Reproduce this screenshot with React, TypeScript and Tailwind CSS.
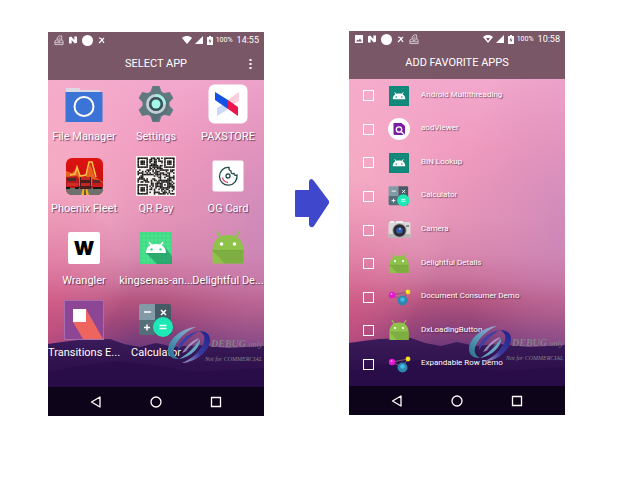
import type { ReactNode } from "react";

function Wallpaper({ id }: { id: string }) {
  return (
    <svg className="absolute inset-0 h-full w-full" viewBox="0 0 216 384" preserveAspectRatio="none" aria-hidden="true">
      <defs>
        <linearGradient id={`${id}-sky`} x1="0" y1="0" x2="0" y2="1">
          <stop offset="0.12" stopColor="#f2a8cd" />
          <stop offset="0.3" stopColor="#f09cc0" />
          <stop offset="0.48" stopColor="#e595b8" />
          <stop offset="0.58" stopColor="#d888ae" />
          <stop offset="0.65" stopColor="#c6709a" />
          <stop offset="0.7" stopColor="#b3557f" />
          <stop offset="0.75" stopColor="#994779" />
          <stop offset="0.83" stopColor="#6b387b" />
        </linearGradient>
        <radialGradient id={`${id}-lilac`} cx="1" cy="0.5" r="0.5">
          <stop offset="0" stopColor="#c084bd" stopOpacity="0.6" />
          <stop offset="0.5" stopColor="#c985b8" stopOpacity="0.3" />
          <stop offset="1" stopColor="#d07fb4" stopOpacity="0" />
        </radialGradient>
        <radialGradient id={`${id}-glow`} cx="0" cy="0.35" r="0.5">
          <stop offset="0" stopColor="#f8b0c6" stopOpacity="0.8" />
          <stop offset="1" stopColor="#f9b4cb" stopOpacity="0" />
        </radialGradient>
        <radialGradient id={`${id}-rose`} cx="0" cy="0.78" r="0.4">
          <stop offset="0" stopColor="#d9517f" stopOpacity="0.65" />
          <stop offset="0.4" stopColor="#d9517f" stopOpacity="0.35" />
          <stop offset="1" stopColor="#dc5484" stopOpacity="0" />
        </radialGradient>
        <linearGradient id={`${id}-hill`} x1="0" y1="0" x2="0" y2="1">
          <stop offset="0" stopColor="#3b1b5a" />
          <stop offset="0.35" stopColor="#2f124d" />
          <stop offset="1" stopColor="#240b43" />
        </linearGradient>
      </defs>
      <rect width="216" height="384" fill={`url(#${id}-sky)`} />
      <rect width="216" height="384" fill={`url(#${id}-lilac)`} />
      <rect width="216" height="384" fill={`url(#${id}-glow)`} />
      <rect width="216" height="384" fill={`url(#${id}-rose)`} />
      <path
        d="M0 312 L14 310 L30 308 L62 307 L76 312 L92 315 L108 311 L126 315 L150 313 L180 316 L216 314 V384 H0 Z"
        fill={`url(#${id}-hill)`}
      />
      <path d="M0 340 L30 334 L70 329 L110 334 L150 340 L216 336 V384 H0 Z" fill="#230a45" opacity="0.5" />
    </svg>
  );
}

function Watermark({ id }: { id: string }) {
  return (
    <div className="pointer-events-none absolute right-0 top-[294px] flex items-start">
      <svg className="h-[38px] w-[44px] shrink-0" viewBox="0 0 44 38" aria-hidden="true">
        <defs>
          <linearGradient id={`${id}-teal`} x1="1" y1="0" x2="0" y2="1">
            <stop offset="0" stopColor="#a3a6cf" />
            <stop offset="0.5" stopColor="#5b9dbb" />
            <stop offset="1" stopColor="#25708f" />
          </linearGradient>
          <linearGradient id={`${id}-blue`} x1="1" y1="0" x2="0" y2="1">
            <stop offset="0" stopColor="#22228c" />
            <stop offset="0.55" stopColor="#3a3a9e" />
            <stop offset="1" stopColor="#a9a0cc" />
          </linearGradient>
        </defs>
        <path d="M29 1C14 2 1 14 1 24c0 6 4 9 11 9-6-3-7-8-3-15C13 11 20 5 29 1z" fill={`url(#${id}-teal)`} />
        <path d="M33 13c1 8-9 18-21 20 8-4 16-12 21-20z" fill="#6aa5c4" />
        <path d="M15 37C30 36 43 24 43 14c0-6-4-9-11-9 6 3 7 8 3 15-4 7-11 13-20 17z" fill={`url(#${id}-blue)`} />
        <path d="M11 25C10 17 20 7 32 5c-8 4-16 12-21 20z" fill="#3c3fa6" />
        <path d="M32 12c-6 2-13 8-17 15 7-2 14-8 17-15zm-1 2c-2 5-7 9-12 11 3-4 7-8 12-11z" fill="#b9b6dc" opacity="0.700" />
      </svg>
      <div className="w-[53px] whitespace-nowrap pt-[11px] font-['Liberation_Serif',serif] italic text-[#858089]">
        <p className="text-[10px] leading-[14px]">
          <b>DEBUG</b> <span className="text-[8px]">only</span>
        </p>
        <p className="-ml-1.5 text-[6px] leading-[14px]">Not for COMMERCIAL</p>
      </div>
    </div>
  );
}

function PrinterIcon() {
  return (
    <svg className="h-[11px] w-[10px]" viewBox="0 0 11 11" fill="none" stroke="#d8ccd2" aria-hidden="true">
      <path d="M3.500 5V2.500l2-2h3V5M1 10V6l2-1h6l1 1v4zM1 8h9M5 3h2M4 6.500h3" />
    </svg>
  );
}

function NougatIcon() {
  return (
    <svg className="h-[8px] w-[8px]" viewBox="0 0 9 8" aria-hidden="true">
      <path d="M0 8V1l2.500-1L6 4V0h3v7L6.500 8 3 4v4z" fill="#fff" />
    </svg>
  );
}

function CrossIcon() {
  return (
    <svg className="h-[7px] w-[7px]" viewBox="0 0 7 7" aria-hidden="true">
      <path d="M1 1l2 .5 3 4.500M6 1L1 6" stroke="#fff" strokeWidth="1.200" fill="none" />
    </svg>
  );
}

function PictureIcon() {
  return (
    <svg className="h-[8px] w-[8px]" viewBox="0 0 8 8" aria-hidden="true">
      <path fillRule="evenodd" d="M0 0h8v8H0zM1 6.500h6L5 3.500 3.500 5.500 2.500 4.500z" fill="#fff" />
    </svg>
  );
}

function StatusBar({ time, picture }: { time: string; picture?: boolean }) {
  return (
    <div className="flex h-4 items-center justify-between pl-[6px] pr-[5px]">
      <div className="flex items-center gap-[5px]">
        {picture ? <PictureIcon /> : <PrinterIcon />}
        <NougatIcon />
        <span className="h-[11px] w-[11px] rounded-full bg-white" />
        <CrossIcon />
        {picture && <PrinterIcon />}
      </div>
      <div className="flex items-center text-white">
        <svg className="mr-[3px] h-[8px] w-[10px]" viewBox="0 0 10 8" aria-hidden="true">
          <path d="M0 2C3-.6 7-.6 10 2L5 8z" fill="#fff" />
          {picture && <path d="M3 3h4L5 6z" fill="#7a5767" />}
        </svg>
        <svg className="mr-1 h-[8px] w-[8px]" viewBox="0 0 8 8" aria-hidden="true">
          <path d="M8 0v8H0z" fill="#fff" />
        </svg>
        <svg className="mr-[3px] h-[9px] w-[6px]" viewBox="0 0 6 9" aria-hidden="true">
          <path d="M2 0h2v1h2v8H0V1h2z" fill="#fff" />
          <path d="M3.500 2L1.500 5.500H3L2.500 8l2-3.500H3z" fill="#7a5767" />
        </svg>
        <span className="mr-1 text-[7px] leading-none">100%</span>
        <span className="text-[9px] leading-none">{time}</span>
      </div>
    </div>
  );
}

function NavBar() {
  return (
    <nav className="relative flex h-[29px] items-center bg-[#0e0419] px-[18px]">
      <button type="button" aria-label="Back" className="flex flex-1 justify-center">
        <svg className="h-[12px] w-[12px]" viewBox="0 0 12 12" fill="none" stroke="#fff" strokeWidth="1.300">
          <path d="M10 1v10L1.500 6z" strokeLinejoin="round" />
        </svg>
      </button>
      <button type="button" aria-label="Home" className="flex flex-1 justify-center">
        <svg className="h-[12px] w-[12px]" viewBox="0 0 12 12" fill="none" stroke="#fff" strokeWidth="1.300">
          <circle cx="6" cy="6" r="5" />
        </svg>
      </button>
      <button type="button" aria-label="Recent apps" className="flex flex-1 justify-center">
        <svg className="h-[12px] w-[12px]" viewBox="0 0 12 12" fill="none" stroke="#fff" strokeWidth="1.300">
          <path d="M1.500 1.500h9v9h-9z" />
        </svg>
      </button>
    </nav>
  );
}

function Phone({
  id,
  title,
  time,
  menu,
  children,
}: {
  id: string;
  title: string;
  time: string;
  menu?: boolean;
  children: ReactNode;
}) {
  return (
    <section className="relative flex h-[384px] w-[216px] shrink-0 flex-col overflow-hidden">
      <Wallpaper id={id} />
      <header className="relative h-12 bg-[#7a5767]">
        <StatusBar time={time} picture={!menu} />
        <div className="relative flex h-8 items-center justify-center">
          <h1 className="text-[11px] leading-4 text-white">{title}</h1>
          {menu && (
            <button type="button" aria-label="More options" className="absolute right-[11px] flex h-4 w-[5px] items-center justify-center">
              <svg className="h-[10px] w-[3px]" viewBox="0 0 3 10" fill="#fff">
                <path d="M.5 0h2v2h-2zM.5 4h2v2h-2zM.5 8h2v2h-2z" />
              </svg>
            </button>
          )}
        </div>
      </header>
      <main className="relative flex flex-1 flex-col">{children}</main>
      <Watermark id={id} />
      <NavBar />
    </section>
  );
}

function FileManagerIcon() {
  return (
    <svg className="h-10 w-10" viewBox="0 0 40 40" aria-hidden="true">
      <path d="M2 4h13l2 2h19v6H2z" fill="#dcd8e4" />
      <path d="M1.500 8h37v30h-37z" fill="#3b73d6" />
      <circle cx="20" cy="22.500" r="9.500" fill="none" stroke="#fff" strokeWidth="2" />
    </svg>
  );
}

function SettingsIcon() {
  const teeth = [0, 60, 120, 180, 240, 300];
  return (
    <svg className="h-10 w-10" viewBox="0 0 40 40" aria-hidden="true">
      <g fill="#607980">
        {teeth.map((angle) => (
          <path key={angle} d="M14.500 8L16.500 2h7L25.500 8z" transform={`rotate(${angle} 20 20)`} />
        ))}
        <circle cx="20" cy="20" r="13.500" />
      </g>
      <path d="M14 28L30 14l3 4-3 11-6 3-4 5h-3z" fill="#4a626b" opacity="0.400" />
      <circle cx="20" cy="20" r="8.500" fill="none" stroke="#c3d0d3" strokeWidth="3" />
      <path d="M20 11.500a8.500 8.500 0 0 1 8.500 8.500" fill="none" stroke="#a5eee3" strokeWidth="3" />
      <circle cx="20" cy="20" r="7" fill="#34525c" />
      <circle cx="20" cy="20" r="4.500" fill="#a5f7ea" />
    </svg>
  );
}

function PaxstoreIcon() {
  return (
    <svg className="h-10 w-10" viewBox="0 0 40 40" aria-hidden="true">
      <rect x="0.500" y="0.500" width="39" height="39" rx="6" fill="#fff" />
      <path d="M31 8v9l-10 6v-8z" fill="#fbcfdc" />
      <path d="M9 24l10-6v8l-10 6z" fill="#cbdafa" />
      <path d="M7 8l13 8v9L7 16z" fill="#1350e8" />
      <path d="M20 16l10 7v9l-10-7z" fill="#e8174f" />
    </svg>
  );
}

function PhoenixIcon() {
  return (
    <svg className="h-[37px] w-[37px]" viewBox="0 0 37 37" aria-hidden="true">
      <defs>
        <linearGradient id="phoenix-red" x1="0" y1="0" x2="0" y2="1">
          <stop offset="0" stopColor="#e01212" />
          <stop offset="0.6" stopColor="#c81010" />
          <stop offset="1" stopColor="#4b3c38" />
        </linearGradient>
        <clipPath id="phoenix-clip">
          <rect width="37" height="37" rx="6" />
        </clipPath>
      </defs>
      <g clipPath="url(#phoenix-clip)">
        <rect width="37" height="37" fill="url(#phoenix-red)" />
        <path d="M0 13l6 2 5-5 4 8 5 1 4-14 5 14 8 5v4H0z" fill="#e8601f" />
        <path d="M4 17l5-1 2-7 3 9 6-1 3-13h3l4 15" fill="none" stroke="#f8c548" strokeWidth="1.500" />
        <path d="M0 30h37v7H0z" fill="#6d706b" />
        <path d="M17 30h4l2 7h-8z" fill="#f2ad26" />
        <path d="M18.500 30h1l.5 7h-2z" fill="#4c4c42" />
        <path d="M0 19l11-1 2 3v9H0z" fill="#b3191b" />
        <path d="M1 20h9v3H1z" fill="#4b2d2e" />
        <path d="M1 25h11v3H1z" fill="#d42b27" />
        <path d="M14 19h11v12H14z" fill="#4c1d1e" />
        <path d="M15 19h9v3h-9zM15 25h9v3h-9z" fill="#c42825" />
        <path d="M26 21l7 1 4 3v5H26z" fill="#c91c1c" />
        <path d="M27 22h6l2 3h-8z" fill="#5d2a2b" />
        <path d="M0 29h4v2H0zM9 29h4v2H9zM27 29h9v2h-9z" fill="#1c1718" />
      </g>
    </svg>
  );
}

const QR_SIZE = 25;

function isDark(x: number, y: number) {
  const finders = [
    [0, 0],
    [QR_SIZE - 7, 0],
    [0, QR_SIZE - 7],
  ];
  for (const [fx, fy] of finders) {
    const dx = x - fx;
    const dy = y - fy;
    if (dx >= -1 && dx <= 7 && dy >= -1 && dy <= 7) {
      const ring = Math.max(Math.abs(dx - 3), Math.abs(dy - 3));
      return ring === 3 || ring <= 1;
    }
  }
  const ring = Math.max(Math.abs(x - 18), Math.abs(y - 18));
  if (ring <= 2) return ring !== 1;
  const hash = Math.sin(x * 12.9898 + y * 78.233) * 43758.5453;
  return hash - Math.floor(hash) > 0.48;
}

function QrIcon() {
  const cells: ReactNode[] = [];
  for (let y = 0; y < QR_SIZE; y++) {
    for (let x = 0; x < QR_SIZE; x++) {
      if (isDark(x, y)) cells.push(<rect key={`${x}-${y}`} x={x} y={y} width="1.04" height="1.04" />);
    }
  }
  return (
    <svg className="h-10 w-10 bg-[#f5f1ee]" viewBox="-1 -1 27 27" fill="#171616" aria-hidden="true">
      {cells}
    </svg>
  );
}

function OgCardIcon() {
  return (
    <svg className="h-8 w-8" viewBox="0 0 32 32" fill="none" aria-hidden="true">
      <rect x="0.500" y="0.500" width="31" height="31" rx="2" fill="#fff" />
      <path
        d="M17 7.500a8.800 8.800 0 1 0 8 7.500c-1.500 1-3 0-3-1.500-2 .5-3.500-.5-3-2.500-1.500-.5-2.500-1.500-2-3.500z"
        stroke="#1f4a49"
        strokeWidth="1.300"
      />
      <circle cx="16" cy="16" r="2" stroke="#1f4a49" strokeWidth="1.300" />
      <path d="M10.500 17.500c.5 3 2.500 4.500 5.500 5" stroke="#e5395d" strokeWidth="1.300" />
    </svg>
  );
}

function WranglerIcon() {
  return (
    <span className="flex h-8 w-8 items-center justify-center rounded-[2px] bg-white font-['Inter',sans-serif] text-[19px] font-black leading-none text-black" aria-hidden="true">
      W
    </span>
  );
}

function AndroidTileIcon({ small }: { small?: boolean }) {
  const tile = small ? "#0b8576" : "#3ddc84";
  const grid = small ? "#2c9688" : "#6be6a2";
  return (
    <svg className={small ? "h-5 w-5" : "h-8 w-8"} viewBox="0 0 32 32" aria-hidden="true">
      <rect width="32" height="32" rx="1" fill={tile} />
      <path
        d="M4 0v32M8 0v32M12 0v32M16 0v32M20 0v32M24 0v32M28 0v32M0 4h32M0 8h32M0 12h32M0 16h32M0 20h32M0 24h32M0 28h32"
        stroke={grid}
        strokeWidth="0.500"
      />
      {!small && <path d="M6 21l11 11h15V24L24 14z" fill="#0c6b4e" opacity="0.450" />}
      <path d="M6 21c0-6 4-9 10-9s10 3 10 9z" fill="#fff" />
      <path d="M9 10l3 4M23 10l-3 4" stroke="#fff" strokeWidth="1.500" />
      <circle cx="11.500" cy="17.500" r="1.200" fill={tile} />
      <circle cx="20.500" cy="17.500" r="1.200" fill={tile} />
    </svg>
  );
}

function DroidIcon({ small }: { small?: boolean }) {
  return (
    <svg className={small ? "h-[21px] w-5" : "h-[34px] w-8"} viewBox="0 0 32 34" aria-hidden="true">
      <path d="M4.500 0l5 8M27.500 0l-5 8" stroke="#8bc34a" strokeWidth="1.800" />
      <path d="M.5 19C1 9 7 4 16 4s15 5 15.500 15v13.500h-31z" fill="#8fc24b" />
      <path d="M.5 19.500h31v13H13z" fill="#7eae42" />
      <path d="M.5 19.500h31" stroke="#74a43d" strokeWidth="0.800" />
      <circle cx="9.500" cy="13" r="1.800" fill="#fff" />
      <circle cx="22.500" cy="13" r="1.800" fill="#fff" />
    </svg>
  );
}

function TransitionsIcon() {
  return (
    <svg className="h-10 w-10" viewBox="0 0 40 40" aria-hidden="true">
      <rect x="0.500" y="0.500" width="39" height="39" fill="#8d4596" stroke="#a66cae" />
      <path d="M9 22l13-13 17 30H19z" fill="#ee655f" />
      <rect x="9" y="9" width="13" height="13" fill="#fff" />
    </svg>
  );
}

function CalculatorIcon({ small }: { small?: boolean }) {
  return (
    <svg className={small ? "h-[22px] w-[22px]" : "h-9 w-9"} viewBox="0 0 36 36" aria-hidden="true">
      <path d="M1 4a2 2 0 0 1 2-2h14v16H1z" fill="#829aa5" />
      <path d="M17 2h14a2 2 0 0 1 2 2v14H17z" fill="#455a64" />
      <path d="M1 18h16v15H3a2 2 0 0 1-2-2z" fill="#546e7a" />
      <path d="M17 18h16v15H17z" fill="#37474f" />
      <path d="M6 10h7M23 8l5 5M28 8l-5 5M6 25.500h6M9 22.500v6" stroke="#fff" strokeWidth="1.500" />
      <circle cx="25" cy="25" r="10" fill="#1de9b6" />
      <path d="M21.500 23.500h7M21.500 26.500h7" stroke="#fff" strokeWidth="1.400" />
    </svg>
  );
}

function AodViewerIcon() {
  return (
    <svg className="h-[22px] w-[22px]" viewBox="0 0 22 22" aria-hidden="true">
      <circle cx="11" cy="11" r="11" fill="#fff" />
      <path d="M5.500 5h8l3.500 3v9H7a1.500 1.500 0 0 1-1.500-1.500z" fill="#7b1fa2" />
      <circle cx="11" cy="11.500" r="2.700" fill="none" stroke="#fff" strokeWidth="1.300" />
      <path d="M13 13.500l3.500 3.500" stroke="#fff" strokeWidth="1.300" />
    </svg>
  );
}

function CameraIcon() {
  return (
    <svg className="h-[18px] w-[23px]" viewBox="0 0 23 18" aria-hidden="true">
      <rect x="0.500" y="1" width="22" height="16" rx="1.500" fill="#dcd9da" />
      <path d="M.5 13h22v3a1 1 0 0 1-1 1h-20a1 1 0 0 1-1-1z" fill="#b9b5b7" />
      <path d="M2 0h4v2H2zM8 0h7v2H8z" fill="#f2f0f0" />
      <circle cx="11.500" cy="9.500" r="7.200" fill="#aaa6a8" />
      <circle cx="11.500" cy="9.500" r="6.200" fill="#2c2b31" />
      <circle cx="11.500" cy="9.500" r="3.300" fill="#3559a4" />
      <circle cx="12" cy="8" r="1.200" fill="#79a8f0" />
      <path d="M18 4h3v2h-3z" fill="#8f8b8e" />
    </svg>
  );
}

function MoleculeIcon() {
  return (
    <svg className="h-[17px] w-[23px]" viewBox="0 0 23 17" aria-hidden="true">
      <path d="M4 6L20 3L14 11z" fill="none" stroke="#77606e" />
      <circle cx="4" cy="6" r="3.200" fill="#e414cf" />
      <circle cx="3.500" cy="5" r="1" fill="#ff8df2" />
      <circle cx="14.500" cy="11.500" r="5" fill="#2f86ae" />
      <circle cx="14.500" cy="10.500" r="2.300" fill="#42bbe0" />
      <circle cx="20" cy="3" r="2.400" fill="#f4d90c" />
      <circle cx="19.500" cy="2.500" r="0.900" fill="#fff7a0" />
    </svg>
  );
}

const launcherApps: { name: string; icon: ReactNode }[] = [
  { name: "File Manager", icon: <FileManagerIcon /> },
  { name: "Settings", icon: <SettingsIcon /> },
  { name: "PAXSTORE", icon: <PaxstoreIcon /> },
  { name: "Phoenix Fleet", icon: <PhoenixIcon /> },
  { name: "QR Pay", icon: <QrIcon /> },
  { name: "OG Card", icon: <OgCardIcon /> },
  { name: "Wrangler", icon: <WranglerIcon /> },
  { name: "kingsenas-an...", icon: <AndroidTileIcon /> },
  { name: "Delightful De...", icon: <DroidIcon /> },
  { name: "Transitions E...", icon: <TransitionsIcon /> },
  { name: "Calculator", icon: <CalculatorIcon /> },
];

const favoriteApps: { id: string; name: string; icon: ReactNode }[] = [
  { id: "multithreading", name: "Android Multithreading", icon: <AndroidTileIcon small /> },
  { id: "aod", name: "aodViewer", icon: <AodViewerIcon /> },
  { id: "bin", name: "BIN Lookup", icon: <AndroidTileIcon small /> },
  { id: "calculator", name: "Calculator", icon: <CalculatorIcon small /> },
  { id: "camera", name: "Camera", icon: <CameraIcon /> },
  { id: "details", name: "Delightful Details", icon: <DroidIcon small /> },
  { id: "document", name: "Document Consumer Demo", icon: <MoleculeIcon /> },
  { id: "loading", name: "DxLoadingButton", icon: <DroidIcon small /> },
  { id: "expandable", name: "Expandable Row Demo", icon: <MoleculeIcon /> },
];

export default function App() {
  return (
    <div className="flex min-h-screen items-start bg-white pl-12 pt-[31px] font-['Roboto',sans-serif]">
      <div className="pt-px">
        <Phone id="launcher" title="SELECT APP" time="14:55" menu>
          <div className="grid grid-cols-3">
            {launcherApps.map((app) => (
              <button key={app.name} type="button" className="flex h-[72px] flex-col items-center pt-1">
                <span className="flex h-10 items-center justify-center">{app.icon}</span>
                <span className="mt-[5px] whitespace-nowrap text-[11px] leading-4 text-white [text-shadow:1px_1px_1px_rgba(60,20,50,0.7)]">
                  {app.name}
                </span>
              </button>
            ))}
          </div>
        </Phone>
      </div>
      <svg className="ml-[31px] mr-5 mt-[147px] h-[50px] w-[34px] shrink-0" viewBox="0 0 34 50" aria-hidden="true">
        <path d="M0 13q0-1 1-1h13V3q2-4 5 0l15 20q0.500 2-.5 3L19 48q-3 3-5-1v-8H1q-1 0-1-1z" fill="#3f48cc" />
      </svg>
      <Phone id="favorites" title="ADD FAVORITE APPS" time="10:58">
        <ul className="flex flex-1 flex-col pb-[5px]">
          {favoriteApps.map((app) => (
            <li key={app.id} className="flex flex-1 items-center pl-[14px]">
              <input
                id={app.id}
                type="checkbox"
                className="h-[11px] w-[11px] shrink-0 appearance-none border border-white outline-none checked:bg-white"
              />
              <label htmlFor={app.id} className="flex flex-1 items-center">
                <span className="ml-[13px] flex w-6 justify-center">{app.icon}</span>
                <span className="ml-[10px] pb-0.5 text-[8px] leading-3 text-white [text-shadow:1px_1px_1px_rgba(60,20,50,0.7)]">
                  {app.name}
                </span>
              </label>
            </li>
          ))}
        </ul>
      </Phone>
    </div>
  );
}
